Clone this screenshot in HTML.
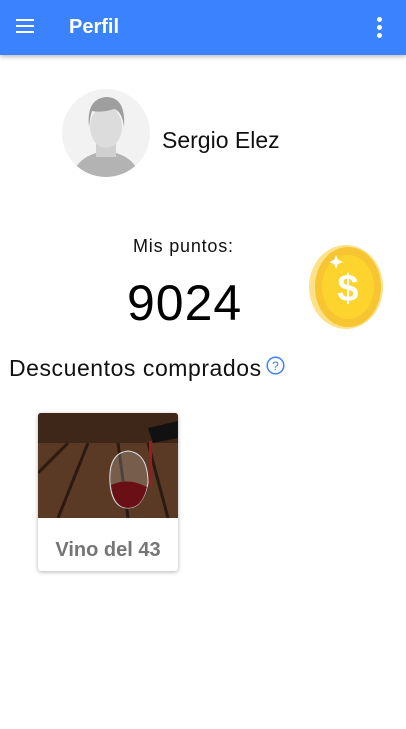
<!DOCTYPE html>
<html><head><style>
body{margin:0;width:406px;height:729px;background:#fff;font-family:"Liberation Sans",sans-serif;position:relative;overflow:hidden}
.hdr{position:absolute;left:0;top:0;width:406px;height:55px;background:#3b82fe;box-shadow:0 2px 4px rgba(0,0,0,.25)}
.t{position:absolute;white-space:nowrap}
</style></head><body>
<div class="hdr">
<div style="position:absolute;left:16px;top:19px;width:18px;height:2px;background:#fff;box-shadow:0 6px 0 #fff,0 12px 0 #fff"></div>
<div class="t" style="left:69px;top:16px;color:#fff;font-weight:bold;font-size:20px">Perfil</div>
<div style="position:absolute;left:377px;top:17px;width:5px;height:5px;border-radius:50%;background:#fff;box-shadow:0 8px 0 #fff,0 16px 0 #fff"></div>
</div>
<svg style="position:absolute;left:62px;top:89px" width="88" height="88" viewBox="0 0 88 88">
<defs><clipPath id="c"><circle cx="44" cy="44" r="44"/></clipPath></defs>
<circle cx="44" cy="44" r="44" fill="#f2f2f2"/>
<g clip-path="url(#c)">
<path d="M10 88 Q14 70 34 64 L54 64 Q74 70 78 88Z" fill="#b3b3b3"/>
<rect x="34" y="50" width="20" height="18" fill="#d0d0d0"/>
<ellipse cx="44" cy="38" rx="16" ry="21" fill="#dcdcdc"/>
<path d="M27 38 Q24 10 44 8 Q64 8 62 38 Q60 22 52 20 Q40 24 30 22 Q28 28 27 38Z" fill="#9e9e9e"/>
</g></svg>
<div class="t" style="left:162px;top:127px;font-size:23px;color:#111">Sergio Elez</div>
<div class="t" style="left:133px;top:236px;font-size:18px;letter-spacing:0.8px;color:#111">Mis puntos:</div>
<div class="t" style="left:127px;top:274px;font-size:50px;color:#000;letter-spacing:1px">9024</div>
<svg style="position:absolute;left:308px;top:245px" width="76" height="85" viewBox="0 0 76 85">
<ellipse cx="38" cy="42" rx="37" ry="42" fill="#fde28a"/>
<ellipse cx="40" cy="42" rx="33" ry="40" fill="#f7c531"/>
<ellipse cx="40" cy="42" rx="26" ry="32" fill="#fdd42e"/>
<text x="40" y="56" font-size="38" font-weight="bold" text-anchor="middle" fill="#fff" font-family="Liberation Sans">$</text>
<path d="M28 10 l2 5 5 2 -5 2 -2 5 -2 -5 -5 -2 5 -2z" fill="#fff"/>
</svg>
<div class="t" style="left:9px;top:355px;font-size:23px;letter-spacing:0.55px;color:#111">Descuentos comprados</div>
<svg style="position:absolute;left:266px;top:356px" width="19" height="19" viewBox="0 0 19 19"><circle cx="9.5" cy="9.5" r="8.3" fill="none" stroke="#3b82fe" stroke-width="1.5"/><text x="9.5" y="14" font-size="12" text-anchor="middle" fill="#3b82fe" font-family="Liberation Sans">?</text></svg>
<div style="position:absolute;left:38px;top:413px;width:140px;height:158px;border-radius:3px;box-shadow:0 1px 4px rgba(0,0,0,.3);overflow:hidden;background:#fff">
<svg width="140" height="105" viewBox="0 0 140 105">
<rect width="140" height="105" fill="#5a3a25"/>
<rect width="140" height="30" fill="#3e2718"/>
<path d="M0 60 L30 30 M20 105 L50 30 M90 105 L80 30 M130 105 L110 30" stroke="#2a1a10" stroke-width="3"/>
<path d="M110 15 L140 8 L140 25 L115 30Z" fill="#111"/>
<path d="M72 70 Q70 40 90 38 Q110 40 110 70 Q105 95 90 95 Q74 95 72 70Z" fill="rgba(255,255,255,.18)" stroke="#ddd" stroke-width="1"/>
<path d="M73 72 Q90 64 109 74 Q104 95 90 95 Q76 95 73 72Z" fill="#6a0f15"/>
<rect x="111" y="28" width="3" height="45" fill="#a01820"/>
</svg>
<div style="text-align:center;font-size:20px;color:#757575;margin-top:16px;font-weight:bold">Vino del 43</div>
</div>
</body></html>
